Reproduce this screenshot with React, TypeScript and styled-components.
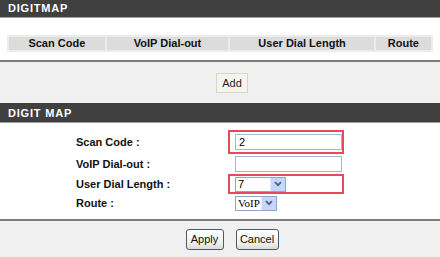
import React from 'react';
import styled, { createGlobalStyle } from 'styled-components';

const GlobalStyle = createGlobalStyle`
  body {
    margin: 0;
    background: #ffffff;
    font-family: 'Liberation Sans', Arial, sans-serif;
    font-size: 11px;
    color: #000;
  }
`;

const Page = styled.div`
  width: 440px;
  height: 257px;
  display: flex;
  flex-direction: column;
  overflow: hidden;
`;

const SectionTitle = styled.div<{ $h: number }>`
  height: ${(p) => p.$h}px;
  background: #404040;
  border-bottom: 1px solid #a0a0a0;
  color: #ffffff;
  font-weight: bold;
  font-size: 11px;
  letter-spacing: 0.8px;
  display: flex;
  align-items: center;
  padding-left: 8px;
  box-sizing: border-box;
`;

const WhiteArea = styled.div<{ $pt: number; $pb: number }>`
  background: #ffffff;
  padding: ${(p) => p.$pt}px 7px ${(p) => p.$pb}px 7px;
  border-bottom: 2px solid #7c7c7c;
`;

const ListTable = styled.table`
  width: 426px;
  border-collapse: collapse;
  border: 2px solid #ececec;
`;

const HeadCell = styled.th<{ $w: number }>`
  width: ${(p) => p.$w}px;
  height: 13px;
  padding: 0;
  background: #dcdcdc;
  border: 2px solid #ececec;
  font-weight: bold;
  font-size: 11px;
  text-align: center;
  color: #111;
`;

const ButtonBar = styled.div<{ $h: number }>`
  height: ${(p) => p.$h}px;
  background: #f0f0f0;
  display: flex;
  align-items: center;
  justify-content: center;
  gap: 12px;
  padding-left: 24px;
  box-sizing: border-box;
`;

const AddButton = styled.button`
  width: 32px;
  height: 20px;
  padding: 0;
  background: #f5f5ee;
  border: 1px solid #d6d6cc;
  font-family: 'Liberation Sans', Arial, sans-serif;
  font-size: 11px;
  color: #222;
`;

const PushButton = styled.button<{ $w: number }>`
  width: ${(p) => p.$w}px;
  height: 21px;
  padding: 0;
  border: 1px solid #4a5a6a;
  border-radius: 3px;
  background: linear-gradient(#ffffff, #f0f0ea 70%, #dcdcd4);
  font-family: 'Liberation Sans', Arial, sans-serif;
  font-size: 11px;
  color: #111;
`;

const Form = styled.div`
  background: #ffffff;
  padding: 7px 0 7px 76px;
  border-bottom: 2px solid #7c7c7c;
  display: flex;
  flex-direction: column;
`;

const FormRow = styled.div<{ $h: number }>`
  height: ${(p) => p.$h}px;
  display: grid;
  grid-template-columns: 152px 1fr;
  align-items: center;
`;

const Label = styled.div`
  font-weight: bold;
  font-size: 11px;
  color: #111;
`;

const Field = styled.div<{ $mark?: boolean }>`
  width: 116px;
  height: 100%;
  box-sizing: border-box;
  display: flex;
  align-items: center;
  padding-left: ${(p) => (p.$mark ? 5 : 7)}px;
  border: ${(p) => (p.$mark ? '2px solid #e4495d' : 'none')};
`;

const TextBox = styled.div`
  width: 107px;
  height: 16px;
  box-sizing: border-box;
  border: 1px solid #a9b8c8;
  background: #fff;
  font-size: 11px;
  display: flex;
  align-items: center;
  padding-left: 3px;
`;

const Select = styled.div<{ $w: number; $serif?: boolean }>`
  width: ${(p) => p.$w}px;
  height: 15px;
  box-sizing: border-box;
  border: 1px solid #8fa6c8;
  background: #fff;
  display: flex;
  align-items: center;
  justify-content: space-between;
  padding-left: 2px;
  font-size: 11px;
  font-family: ${(p) => (p.$serif ? "'Liberation Serif', serif" : "'Liberation Sans', Arial, sans-serif")};
`;

const Arrow = styled.span`
  width: 14px;
  height: 13px;
  background: #c8d6fb;
  border-left: 1px solid #e6ecfc;
  display: flex;
  align-items: center;
  justify-content: center;
`;

const Chevron = () => (
  <Arrow>
    <svg width="8" height="6" viewBox="0 0 8 6">
      <path d="M1 1.2 L4 4.2 L7 1.2" fill="none" stroke="#4d6185" strokeWidth="1.8" />
    </svg>
  </Arrow>
);

const columns = [
  { name: 'Scan Code', w: 98 },
  { name: 'VoIP Dial-out', w: 125 },
  { name: 'User Dial Length', w: 147 },
  { name: 'Route', w: 56 },
];

export default function App() {
  return (
    <Page>
      <GlobalStyle />
      <SectionTitle $h={18}>DIGITMAP</SectionTitle>
      <WhiteArea $pt={17} $pb={8}>
        <ListTable>
          <thead>
            <tr>
              {columns.map((c) => (
                <HeadCell key={c.name} $w={c.w}>
                  {c.name}
                </HeadCell>
              ))}
            </tr>
          </thead>
        </ListTable>
      </WhiteArea>
      <ButtonBar $h={42}>
        <AddButton>Add</AddButton>
      </ButtonBar>
      <SectionTitle $h={20}>DIGIT MAP</SectionTitle>
      <Form>
        <FormRow $h={24}>
          <Label>Scan Code :</Label>
          <Field $mark>
            <TextBox>2</TextBox>
          </Field>
        </FormRow>
        <FormRow $h={20}>
          <Label>VoIP Dial-out :</Label>
          <Field>
            <TextBox />
          </Field>
        </FormRow>
        <FormRow $h={20}>
          <Label>User Dial Length :</Label>
          <Field $mark>
            <Select $w={51}>
              7<Chevron />
            </Select>
          </Field>
        </FormRow>
        <FormRow $h={18}>
          <Label>Route :</Label>
          <Field>
            <Select $w={42} $serif>
              VoIP<Chevron />
            </Select>
          </Field>
        </FormRow>
      </Form>
      <ButtonBar $h={36}>
        <PushButton $w={38}>Apply</PushButton>
        <PushButton $w={43}>Cancel</PushButton>
      </ButtonBar>
    </Page>
  );
}
